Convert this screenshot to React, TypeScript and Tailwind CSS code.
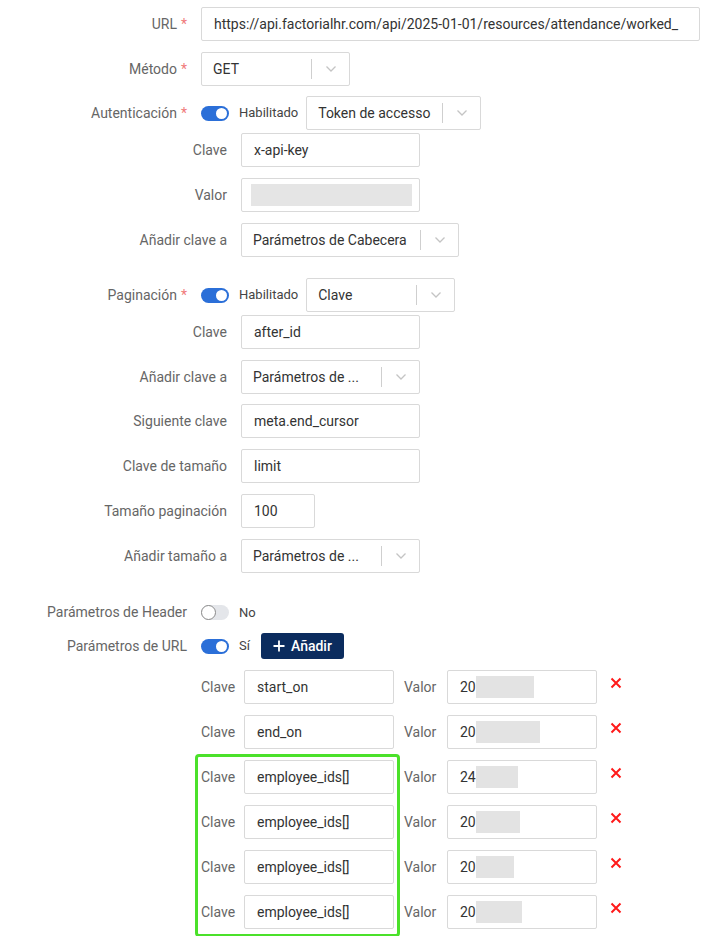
import { ReactNode } from 'react';

function Chevron() {
  return (
    <svg width="12" height="8" viewBox="0 0 12 8" fill="none" className="shrink-0">
      <path d="M1.5 1.5L6 6l4.5-4.5" stroke="#c4c4c4" strokeWidth="1.3" />
    </svg>
  );
}

function Select({ value, width }: { value: string; width: string }) {
  return (
    <div
      className={`flex h-[34px] items-center rounded-[2px] border border-[#d9d9d9] bg-white pl-[11px] ${width}`}
    >
      <span className="flex-1 truncate text-[14px] text-[#333]">{value}</span>
      <span className="h-[20px] w-px bg-[#cfcfcf]" />
      <span className="flex w-[37px] justify-center">
        <Chevron />
      </span>
    </div>
  );
}

function Input({ value, width }: { value?: string; width: string }) {
  return (
    <div
      className={`flex h-[34px] items-center overflow-hidden rounded-[2px] border border-[#d9d9d9] bg-white pl-[12px] ${width}`}
    >
      {value && <span className="whitespace-nowrap text-[14px] text-[#333]">{value}</span>}
    </div>
  );
}

function Toggle({ on }: { on: boolean }) {
  return on ? (
    <span className="flex h-[15px] w-[28px] items-center justify-end rounded-full bg-[#2b6fd8] pr-[2px]">
      <span className="h-[11px] w-[11px] rounded-full bg-white" />
    </span>
  ) : (
    <span className="flex h-[15px] w-[28px] items-center rounded-full bg-[#e4e6ea]">
      <span className="h-[15px] w-[15px] rounded-full border border-[#8a8a8a] bg-white" />
    </span>
  );
}

function Row({
  label,
  required,
  labelWidth,
  className = '',
  children,
}: {
  label: string;
  required?: boolean;
  labelWidth: string;
  className?: string;
  children: ReactNode;
}) {
  return (
    <div className={`flex items-center ${className}`}>
      <div className={`shrink-0 text-right text-[14px] text-[#666] ${labelWidth}`}>
        {label}
        {required && <span className="ml-[4px] text-[#f07a7a]">*</span>}
      </div>
      <div className="ml-[14px] flex items-center">{children}</div>
    </div>
  );
}

function Switch({ on, text }: { on: boolean; text: string }) {
  return (
    <div className="flex items-center">
      <Toggle on={on} />
      <span className="ml-[10px] text-[13px] text-[#444]">{text}</span>
    </div>
  );
}

const params = [
  { key: 'start_on', val: '20', blur: 'w-[58px]' },
  { key: 'end_on', val: '20', blur: 'w-[64px]' },
  { key: 'employee_ids[]', val: '24', blur: 'w-[42px]' },
  { key: 'employee_ids[]', val: '20', blur: 'w-[44px]' },
  { key: 'employee_ids[]', val: '20', blur: 'w-[38px]' },
  { key: 'employee_ids[]', val: '20', blur: 'w-[46px]' },
];

export default function App() {
  return (
    <div
      className="relative h-[936px] w-[708px] overflow-hidden bg-white pt-[7px]"
      style={{ fontFamily: 'Roboto, "Noto Sans", sans-serif' }}
    >
      <Row label="URL" required labelWidth="w-[187px]">
        <Input
          value="https://api.factorialhr.com/api/2025-01-01/resources/attendance/worked_"
          width="w-[499px]"
        />
      </Row>
      <Row label="Método" required labelWidth="w-[187px]" className="mt-[11px]">
        <Select value="GET" width="w-[149px]" />
      </Row>
      <Row label="Autenticación" required labelWidth="w-[187px]" className="mt-[10px]">
        <Switch on text="Habilitado" />
        <div className="ml-[8px]">
          <Select value="Token de accesso" width="w-[175px]" />
        </div>
      </Row>
      <Row label="Clave" labelWidth="w-[227px]" className="mt-[3px]">
        <Input value="x-api-key" width="w-[179px]" />
      </Row>
      <Row label="Valor" labelWidth="w-[227px]" className="mt-[11px]">
        <div className="flex h-[34px] w-[179px] items-center rounded-[2px] border border-[#d9d9d9] bg-white pl-[9px]">
          <span className="h-[22px] w-[161px] bg-[#e5e5e5]" />
        </div>
      </Row>
      <Row label="Añadir clave a" labelWidth="w-[227px]" className="mt-[11px]">
        <Select value="Parámetros de Cabecera" width="w-[218px]" />
      </Row>

      <Row label="Paginación" required labelWidth="w-[187px]" className="mt-[21px]">
        <Switch on text="Habilitado" />
        <div className="ml-[8px]">
          <Select value="Clave" width="w-[149px]" />
        </div>
      </Row>
      <Row label="Clave" labelWidth="w-[227px]" className="mt-[3px]">
        <Input value="after_id" width="w-[179px]" />
      </Row>
      <Row label="Añadir clave a" labelWidth="w-[227px]" className="mt-[11px]">
        <Select value="Parámetros de ..." width="w-[179px]" />
      </Row>
      <Row label="Siguiente clave" labelWidth="w-[227px]" className="mt-[10px]">
        <Input value="meta.end_cursor" width="w-[179px]" />
      </Row>
      <Row label="Clave de tamaño" labelWidth="w-[227px]" className="mt-[11px]">
        <Input value="limit" width="w-[179px]" />
      </Row>
      <Row label="Tamaño paginación" labelWidth="w-[227px]" className="mt-[11px]">
        <Input value="100" width="w-[74px]" />
      </Row>
      <Row label="Añadir tamaño a" labelWidth="w-[227px]" className="mt-[11px]">
        <Select value="Parámetros de ..." width="w-[179px]" />
      </Row>

      <Row label="Parámetros de Header" labelWidth="w-[187px]" className="mt-[29px]">
        <Switch on={false} text="No" />
      </Row>
      <Row label="Parámetros de URL" labelWidth="w-[187px]" className="mt-[10px]">
        <Switch on text="Sí" />
        <button
          type="button"
          className="ml-[11px] flex h-[26px] w-[83px] items-center justify-center gap-[6px] rounded-[3px] bg-[#0b2c5e] text-[14px] font-medium text-white"
        >
          <svg width="12" height="12" viewBox="0 0 12 12">
            <path d="M6 0.5v11M0.5 6h11" stroke="white" strokeWidth="1.8" />
          </svg>
          Añadir
        </button>
      </Row>

      <div className="ml-[201px] mt-[11px] flex flex-col gap-[11px]">
        {params.map((p, i) => (
          <div key={i} className="flex items-center">
            <span className="w-[43px] text-[14px] text-[#666]">Clave</span>
            <Input value={p.key} width="w-[150px]" />
            <span className="ml-[10px] w-[43px] text-[14px] text-[#666]">Valor</span>
            <div className="flex h-[34px] w-[150px] items-center rounded-[2px] border border-[#d9d9d9] bg-white pl-[12px]">
              <span className="text-[14px] text-[#333]">{p.val}</span>
              <span className={`h-[22px] bg-[#e3e3e3] ${p.blur}`} />
            </div>
            <svg width="12" height="12" viewBox="0 0 12 12" className="ml-[13px] -mt-[8px]">
              <path d="M1.5 1.5l9 9M10.5 1.5l-9 9" stroke="#ff1a1a" strokeWidth="2" />
            </svg>
          </div>
        ))}
      </div>

      <div className="pointer-events-none absolute left-[195px] top-[754px] h-[183px] w-[205px] rounded-[4px] border-[3px] border-[#4be12a]" />
    </div>
  );
}
